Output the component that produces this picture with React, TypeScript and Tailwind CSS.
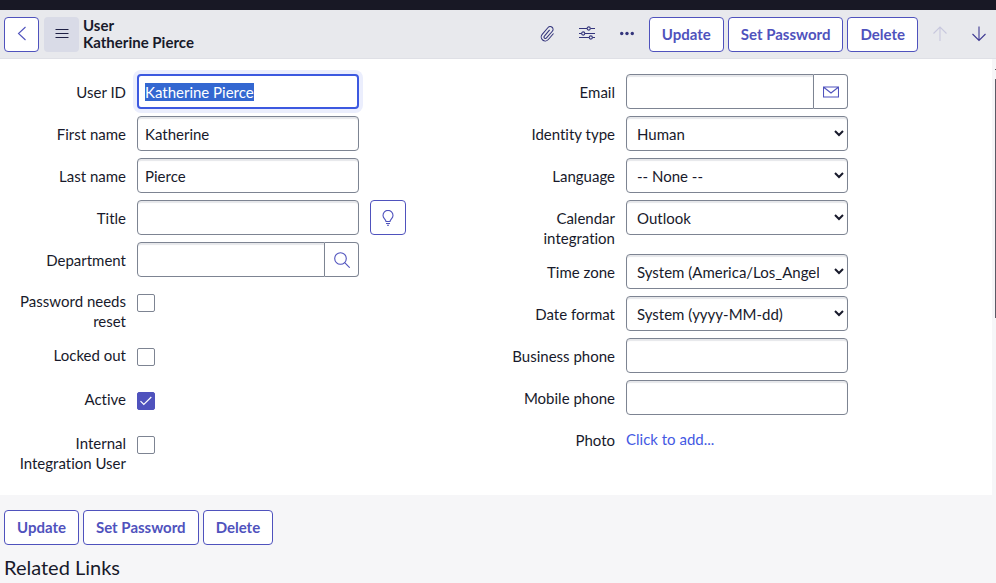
import { useEffect, useRef } from "react";
import type { ComponentProps, ReactNode } from "react";

const fieldClass =
  "block h-[35px] w-full min-w-0 rounded border border-[#7d8492] bg-white text-[15px] text-[#181a2b] shadow-[inset_0_2px_1px_#e6e7ea] outline-none";

function Row({ id, label, after, children }: { id: string; label: string; after?: ReactNode; children: ReactNode }) {
  return (
    <div className="grid min-h-[42px] grid-cols-[126px_minmax(0,1fr)_119px] gap-x-[11px]">
      <label htmlFor={id} className="pt-2 pb-1.5 pl-4 text-right leading-5">
        {label}
      </label>
      <div>{children}</div>
      {after}
    </div>
  );
}

function TextRow({ id, label, value = "", after }: { id: string; label: string; value?: string; after?: ReactNode }) {
  return (
    <Row id={id} label={label} after={after}>
      <input id={id} type="text" defaultValue={value} className={`${fieldClass} px-[7px]`} />
    </Row>
  );
}

function UserIdRow() {
  const ref = useRef<HTMLInputElement>(null);
  useEffect(() => {
    ref.current?.focus();
    ref.current?.select();
  }, []);
  return (
    <Row id="user-id" label="User ID">
      <input
        ref={ref}
        id="user-id"
        type="text"
        defaultValue="Katherine Pierce"
        className="block h-[35px] w-full min-w-0 rounded border-2 border-[#3c59e0] bg-white px-1.5 text-[15px] text-[#181a2b] shadow-[0_0_0_4px_#ebeefd] outline-none selection:bg-[#3367d1] selection:text-white"
      />
    </Row>
  );
}

function AddonRow({ id, label, action, type = "text", icon }: { id: string; label: string; action: string; type?: string; icon: ReactNode }) {
  return (
    <Row id={id} label={label}>
      <div className="flex">
        <input id={id} type={type} className={`${fieldClass} flex-1 rounded-r-none px-[7px]`} />
        <button
          type="button"
          aria-label={action}
          className="flex h-[35px] w-[34px] shrink-0 items-center justify-center rounded-r border border-l-0 border-[#7d8492] bg-white text-[#4f52bd]"
        >
          {icon}
        </button>
      </div>
    </Row>
  );
}

function SelectRow({ id, label, options }: { id: string; label: string; options: string[] }) {
  return (
    <Row id={id} label={label}>
      <select id={id} className={`${fieldClass} pr-3 pl-1.5`}>
        {options.map((o) => (
          <option key={o}>{o}</option>
        ))}
      </select>
    </Row>
  );
}

function CheckRow({ id, label, checked = false }: { id: string; label: string; checked?: boolean }) {
  return (
    <div className="grid min-h-11 grid-cols-[126px_minmax(0,1fr)] gap-x-[11px]">
      <label htmlFor={id} className="pt-[7px] pb-[7px] pl-4 text-right leading-5">
        {label}
      </label>
      <div className="grid size-[18px] self-start pt-2.5">
        <input
          id={id}
          type="checkbox"
          defaultChecked={checked}
          className="peer col-start-1 row-start-1 size-[18px] appearance-none rounded-[2px] border border-[#7d8492] bg-white checked:border-[#4f52bd] checked:bg-[#4f52bd]"
        />
        <svg viewBox="0 0 18 18" fill="none" stroke="#fff" strokeWidth="1.2" className="pointer-events-none invisible col-start-1 row-start-1 size-[18px] peer-checked:visible">
          <path d="M3.5 9.2 6.8 12.5 14.3 5" />
        </svg>
      </div>
    </div>
  );
}

function ActionButton({ children }: { children: ReactNode }) {
  return (
    <button type="button" className="h-[35px] rounded border border-[#4f52bd] bg-white px-3 text-[15px] font-bold whitespace-nowrap text-[#4f52bd]">
      {children}
    </button>
  );
}

function Actions() {
  return (
    <div className="flex gap-1">
      <ActionButton>Update</ActionButton>
      <ActionButton>Set Password</ActionButton>
      <ActionButton>Delete</ActionButton>
    </div>
  );
}

function IconButton({ className = "w-9", ...rest }: ComponentProps<"button">) {
  return <button type="button" className={`flex h-[35px] shrink-0 items-center justify-center rounded ${className}`} {...rest} />;
}

function Icon({ children }: { children: ReactNode }) {
  return (
    <svg viewBox="0 0 16 16" fill="none" stroke="currentColor" strokeWidth="1.1" className="size-4" aria-hidden="true">
      {children}
    </svg>
  );
}

export default function App() {
  return (
    <div className="min-h-screen bg-[#f6f6f8] font-['Lato',sans-serif] text-[15px] text-[#181a2b] [font-variant-ligatures:none]">
      <div className="h-2.5 bg-[#181825]" />
      <header className="flex h-[49px] items-center gap-1 border-b border-[#dfe0e6] bg-[#e8e9ed] pl-1">
        <div className="flex gap-[5px]">
          <IconButton aria-label="Back" className="w-[35px] border border-[#4f52bd] bg-white text-[#4f52bd]">
            <Icon>
              <path d="M11.5 1 4.5 7.500l7 6.500" />
            </Icon>
          </IconButton>
          <IconButton aria-label="Form menu" className="w-[35px] bg-[#d9dbe7] text-[#1f2045]">
            <Icon>
              <path d="M1.5 3.500h13M1.5 7.500h13M1.5 11.500h13" strokeWidth="1" />
            </Icon>
          </IconButton>
        </div>
        <h1 className="flex-1 leading-[17px] font-bold">
          User
          <br />
          Katherine Pierce
        </h1>
        <IconButton aria-label="Attachments" className="w-[35px] text-[#34357c]">
          <svg viewBox="0 0 24 24" fill="none" stroke="currentColor" strokeWidth="1.5" className="size-[17px]" aria-hidden="true">
            <path d="M15 5.500 7.600 14.200a2 2 0 0 0 3 2.700l8.200-9.500a4 4 0 1 0-6-5.300l-8.300 9.600a5.700 5.700 0 1 0 8.700 7.400l7.300-8.500" />
          </svg>
        </IconButton>
        <IconButton aria-label="Personalize form" className="w-9 text-[#34357c]">
          <Icon>
            <path d="M0 2.500h8M11.500 2.500H16M0 7.500h2.500M6 7.500h10M0 11.500h10M13.500 11.500H16" />
            <circle cx="9.700" cy="2.500" r="1.600" />
            <circle cx="4.200" cy="7.500" r="1.600" />
            <circle cx="11.800" cy="11.500" r="1.600" />
          </Icon>
        </IconButton>
        <IconButton aria-label="More options" className="w-9 text-[#34357c]">
          <Icon>
            <g fill="currentColor" stroke="none">
              <circle cx="2.700" cy="7.500" r="1.700" />
              <circle cx="8" cy="7.500" r="1.700" />
              <circle cx="13.300" cy="7.500" r="1.700" />
            </g>
          </Icon>
        </IconButton>
        <Actions />
        <IconButton aria-label="Previous record" disabled className="w-[35px] text-[#c8c8de]">
          <Icon>
            <path d="M8 15V1.500M1.500 7.500 8 1l6.500 6.500" />
          </Icon>
        </IconButton>
        <IconButton aria-label="Next record" className="w-[35px] text-[#3f3a93]">
          <Icon>
            <path d="M8 .500v14M1.500 8 8 14.500 14.500 8" />
          </Icon>
        </IconButton>
      </header>

      <div className="flex">
        <form className="grid flex-1 grid-cols-2 bg-white pt-[15px] pr-3.5 pb-[15px]">
          <div>
            <UserIdRow />
            <TextRow id="first-name" label="First name" value="Katherine" />
            <TextRow id="last-name" label="Last name" value="Pierce" />
            <TextRow
              id="title"
              label="Title"
              after={
                <IconButton aria-label="Suggest title" className="w-9 border border-[#4f52bd] bg-white text-[#4f52bd]">
                  <Icon>
                    <path d="M6 11.500C6 9.500 3 8.500 3 5.400a5 5 0 0 1 10 0c0 3.100-3 4.100-3 6.100zM6 13.500h4M7 15.300h2" />
                  </Icon>
                </IconButton>
              }
            />
            <AddonRow
              id="department"
              label="Department"
              action="Look up department"
              icon={
                <Icon>
                  <circle cx="6.500" cy="6.500" r="5.800" />
                  <path d="m10.700 10.700 5 5" />
                </Icon>
              }
            />
            <CheckRow id="password-reset" label="Password needs reset" />
            <CheckRow id="locked-out" label="Locked out" />
            <CheckRow id="active" label="Active" checked />
            <CheckRow id="internal-user" label="Internal Integration User" />
          </div>
          <div>
            <AddonRow
              id="email"
              label="Email"
              type="email"
              action="Send email"
              icon={
                <Icon>
                  <path d="M.5 3h15v10H.5zM1 3.500l7 5.500 7-5.500" />
                </Icon>
              }
            />
            <SelectRow id="identity-type" label="Identity type" options={["Human"]} />
            <SelectRow id="language" label="Language" options={["-- None --"]} />
            <SelectRow id="calendar" label="Calendar integration" options={["Outlook"]} />
            <SelectRow id="time-zone" label="Time zone" options={["System (America/Los_Angeles)"]} />
            <SelectRow id="date-format" label="Date format" options={["System (yyyy-MM-dd)"]} />
            <TextRow id="business-phone" label="Business phone" />
            <TextRow id="mobile-phone" label="Mobile phone" />
            <Row id="photo" label="Photo">
              <a id="photo" href="#photo" className="block pt-[7px] leading-5 text-[#4459e3]">
                Click to add...
              </a>
            </Row>
          </div>
        </form>
        <div className="flex w-1 flex-col items-end pt-2.5" aria-hidden="true">
          <div className="h-px w-px bg-[#55555f]" />
          <div className="mt-[9px] h-[239px] w-px bg-[#5c5a66]" />
        </div>
      </div>

      <footer className="px-1 pt-[15px]">
        <Actions />
        <h2 className="pt-2.5 text-[20px] leading-6">Related Links</h2>
      </footer>
    </div>
  );
}
